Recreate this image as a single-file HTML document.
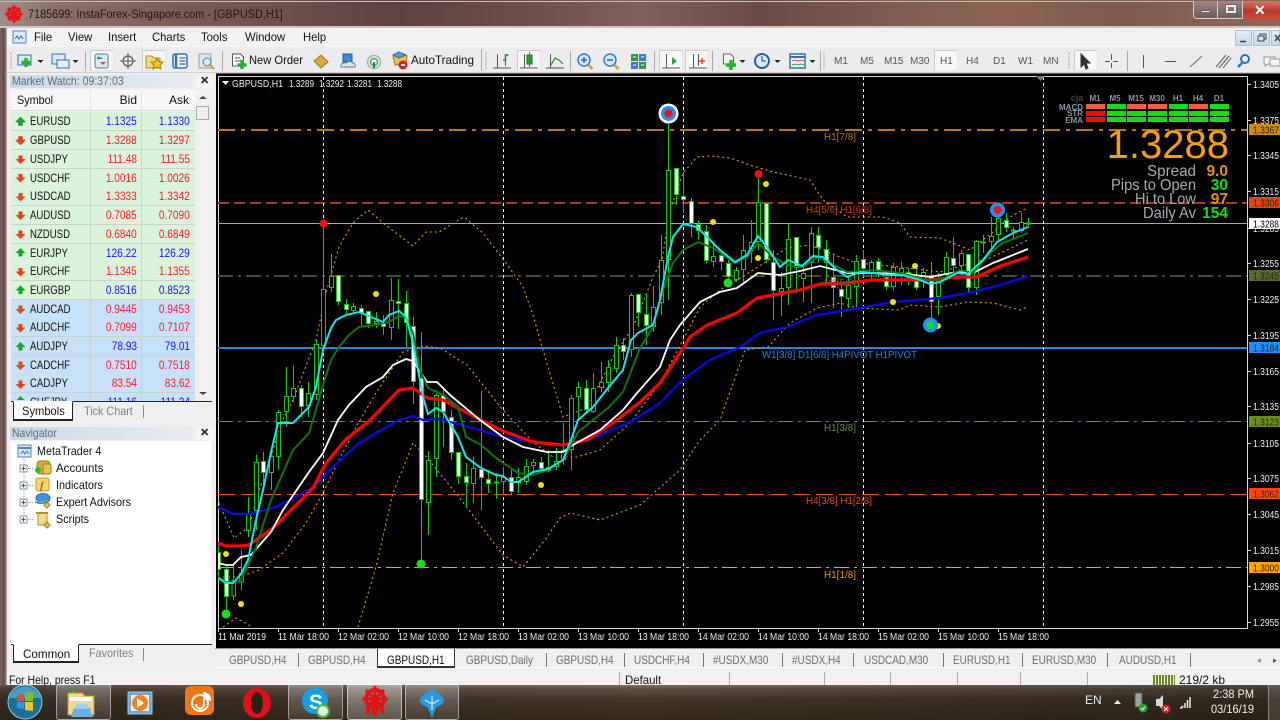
<!DOCTYPE html>
<html><head><meta charset="utf-8"><title>MT4</title>
<style>
html,body{margin:0;padding:0;width:1280px;height:720px;overflow:hidden;background:#6e5450;font-family:"Liberation Sans",sans-serif;font-size:12px;color:#111}
.t{position:absolute;white-space:nowrap;line-height:14px;transform-origin:0 50%}
.b{position:absolute}
.r{text-align:right}
.m{transform:scaleX(.94)}
.n{transform:scaleX(.9)}
.row{position:absolute;left:11px;width:184px;height:18px;border-bottom:1px solid #c9d2cc;font-size:12px;line-height:18px}
.row .s{position:absolute;left:19px;top:0;color:#111;transform:scaleX(.8);transform-origin:0 50%}
.row .bid{position:absolute;right:58px;top:0;transform:scaleX(.84);transform-origin:100% 50%}
.row .ask{position:absolute;right:5px;top:0;transform:scaleX(.84);transform-origin:100% 50%}
.g{background:#dbf3da}.bl{background:#c6e1f8}
.up{color:#1414ff}.dn{color:#ff1a2a}
.row i{position:absolute;left:79px;top:0;width:1px;height:18px;background:#c9d2cc}
.row u{position:absolute;left:130px;top:0;width:1px;height:18px;background:#c9d2cc}
.tab{position:absolute;top:653px;font-size:12px;color:#6f6f6f;line-height:14px;white-space:nowrap;transform:scaleX(.83);transform-origin:0 50%}
.sep{position:absolute;top:653px;width:1px;height:14px;background:#777}
.tf{position:absolute;top:55px;font-size:10px;color:#555;line-height:13px}
.press{position:absolute;background:#f7f7f7;border:1px solid #c9c9c9;border-right-color:#e6e6e6;border-bottom-color:#e6e6e6;box-sizing:border-box}
svg{position:absolute;left:0;top:0}
</style></head><body>

<!-- window glass title -->
<div class="b" style="left:0;top:0;width:1280px;height:28px;background:linear-gradient(90deg,#a08c88 0,#8a7068 60px,#7a5d58 180px,#5c4340 400px,#6b4e49 520px,#80605a 640px,#6a4c46 760px,#7f5d50 900px,#8a6452 1000px,#7d5a4c 1120px,#8a6a5c 1280px)"></div>
<div class="b" style="left:0;top:1px;width:1280px;height:1px;background:#c9bdb9"></div>
<div class="b" style="left:0;top:26px;width:1280px;height:2px;background:#cfc6c3"></div>
<div class="b" style="left:0;top:28px;width:7px;height:660px;background:linear-gradient(90deg,#7e6460,#604a46 60%,#b9aeab)"></div>
<div class="t" style="left:28px;top:7px;color:#1c1412;font-size:12px;transform:scaleX(.905)">7185699: InstaForex-Singapore.com - [GBPUSD,H1]</div>

<!-- window buttons -->
<div class="b" style="left:1193px;top:1px;width:25px;height:18px;background:linear-gradient(#9a8a86,#6e5a56);border:1px solid #d8d0cc;border-top:0;border-radius:0 0 0 4px;box-sizing:border-box"></div>
<div class="b" style="left:1218px;top:1px;width:25px;height:18px;background:linear-gradient(#9a8a86,#6e5a56);border:1px solid #d8d0cc;border-top:0;border-left:0;box-sizing:border-box"></div>
<div class="b" style="left:1243px;top:1px;width:37px;height:18px;background:linear-gradient(#d9756a,#b8362a 55%,#c8503c)"></div>
<div class="b" style="left:1201px;top:10px;width:10px;height:3px;background:#eee;border:1px solid #666;box-sizing:border-box"></div>
<div class="b" style="left:1226px;top:5px;width:10px;height:8px;border:2px solid #eee;box-sizing:border-box;outline:1px solid #666"></div>
<div class="t" style="left:1254px;top:2px;font-size:14px;font-weight:bold;color:#fff;line-height:16px">✕</div>

<!-- client -->
<div class="b" style="left:7px;top:28px;width:1273px;height:19px;background:#f2f2f2"></div>
<div class="b" style="left:7px;top:47px;width:1273px;height:26px;background:#ececee;border-bottom:1px solid #cfcfcf;box-sizing:border-box"></div>
<div class="b" style="left:7px;top:73px;width:209px;height:612px;background:#efefef"></div>
<div class="b" style="left:7px;top:648px;width:1273px;height:37px;background:#efefef"></div>

<!-- menu -->
<span class="t m" style="left:34px;top:30px">File</span>
<span class="t m" style="left:68px;top:30px">View</span>
<span class="t m" style="left:108px;top:30px">Insert</span>
<span class="t m" style="left:152px;top:30px">Charts</span>
<span class="t m" style="left:201px;top:30px">Tools</span>
<span class="t m" style="left:245px;top:30px">Window</span>
<span class="t m" style="left:303px;top:30px">Help</span>
<div class="b" style="left:1235px;top:30px;width:17px;height:16px;background:linear-gradient(#e4eef8,#c4d8ec);border:1px solid #a8c0d8;box-sizing:border-box"></div>
<div class="b" style="left:1253px;top:30px;width:17px;height:16px;background:linear-gradient(#e4eef8,#c4d8ec);border:1px solid #a8c0d8;box-sizing:border-box"></div>
<div class="b" style="left:1271px;top:30px;width:9px;height:16px;background:linear-gradient(#e4eef8,#c4d8ec);border:1px solid #a8c0d8;box-sizing:border-box"></div>

<!-- pressed toolbar -->
<div class="press" style="left:90px;top:50px;width:24px;height:21px"></div>
<div class="press" style="left:142px;top:50px;width:24px;height:21px"></div>
<div class="press" style="left:517px;top:50px;width:24px;height:21px"></div>
<div class="press" style="left:659px;top:50px;width:24px;height:21px"></div>
<div class="press" style="left:685px;top:50px;width:24px;height:21px"></div>
<div class="press" style="left:934px;top:50px;width:24px;height:21px"></div>
<div class="press" style="left:1074px;top:50px;width:24px;height:21px"></div>

<span class="t" style="left:249px;top:53px;transform:scaleX(.93)">New Order</span>
<span class="t" style="left:411px;top:53px;transform:scaleX(.97)">AutoTrading</span>
<span class="tf" style="left:834px">M1</span><span class="tf" style="left:860px">M5</span><span class="tf" style="left:884px">M15</span><span class="tf" style="left:910px">M30</span><span class="tf" style="left:940px">H1</span><span class="tf" style="left:966px">H4</span><span class="tf" style="left:993px">D1</span><span class="tf" style="left:1018px">W1</span><span class="tf" style="left:1043px">MN</span>

<!-- toolbar icons -->
<svg width="1280" height="75" viewBox="0 0 1280 75">
<g fill="none" stroke-width="1">
<g><circle cx="14" cy="14" r="6" fill="none" stroke="#e8141c" stroke-width="3"/><path d="M14 5v18M5 14h18M8 8l12 12M20 8L8 20" stroke="#e8141c" stroke-width="2"/><path d="M12 11h4v8h-4z" fill="#e8141c"/></g>
<rect x="13" y="31" width="13" height="12" fill="#dbe8f6" stroke="#4d86c0"/><path d="M15 39l2-3 2 3 2-3 2 3" stroke="#2d68b0"/>
<path d="M11 52v18M486 52v18M824 52v18M1069 52v18" stroke="#bcbcbc" stroke-width="2" stroke-dasharray="1 1"/>
<path d="M85.5 51v20M222.5 51v20M481.5 49v22M570.5 51v20M654.5 51v20M712.5 51v20M1127.5 51v20M820.5 51v20" stroke="#a8a8a8"/>
<rect x="18" y="55" width="13" height="10" fill="#dbe8f6" stroke="#2f74b5"/><path d="M26 58v9M21.5 62.5h10" stroke="#25b52a" stroke-width="3.5"/>
<path d="M37.5 60h6l-3 3z" fill="#222"/>
<rect x="52" y="54" width="13" height="10" fill="#dbe8f6" stroke="#2f74b5"/><rect x="57" y="60" width="12" height="8" fill="#e8f0fa" stroke="#2f74b5"/>
<path d="M72.5 60h6l-3 3z" fill="#222"/>
<rect x="95" y="54" width="13" height="14" rx="2" fill="#dfeaf6" stroke="#3f7fbd"/><path d="M99 59l2-2 2 2z" fill="#2aa52a"/><path d="M100 62l3 3 3-3z" fill="#e84a20"/><circle cx="98.5" cy="58" r="1.5" fill="#2aa52a"/>
<circle cx="128" cy="61" r="5" stroke="#666" stroke-width="1.4"/><path d="M128 53v16M120 61h16" stroke="#555"/>
<path d="M146 56h6l2 2h6v10h-14z" fill="#f2d979" stroke="#b08d2c"/><path d="M157 58l2 4h4l-3 3 1 4-4-2-4 2 1-4-3-3h4z" fill="#f4c91e" stroke="#a47d10"/>
<rect x="173" y="54" width="14" height="14" rx="2" fill="#f2f7fc" stroke="#2f74b5" stroke-width="1.5"/><path d="M176 54v14" stroke="#2f74b5" stroke-width="2.5"/><path d="M179.5 58h6M179.5 61h6M179.5 64h6" stroke="#335"/>
<rect x="199" y="54" width="12" height="14" fill="#e6e6e6" stroke="#9a9a9a"/><circle cx="207" cy="62" r="4" fill="#d6e8f8" stroke="#4a7da8"/><path d="M210 65l4 4" stroke="#d2a030" stroke-width="2"/>
<path d="M232.5 54h8l3 3v9h-11z" fill="#fff" stroke="#555"/><path d="M235 58h5M235 61h6" stroke="#555"/><path d="M242 60v9M237.5 65h9" stroke="#24b52b" stroke-width="3.5"/>
<path d="M314 61l7-6 7 7-7 6z" fill="#d9aa3b" stroke="#9c7620"/>
<path d="M343 54h9v8h-9z" fill="#3f8ad6" stroke="#1d5aa0"/><path d="M341 66c0-3 3-4 5-3 2-2 5-2 7 0 2 0 3 2 2 4h-14z" fill="#dfe6ee" stroke="#5a7ea8"/>
<circle cx="374" cy="62" r="6.5" stroke="#94b8a8" stroke-width="1.5"/><circle cx="374" cy="62" r="3.5" stroke="#5e9f70" stroke-width="1.5"/><path d="M374 62v6" stroke="#2f7d4a" stroke-width="2"/>
<path d="M393 57c2-3 9-4 14-1l-1 8-11 1z" fill="#e8c14a" stroke="#9b7d1c"/><path d="M393 55l6-3 7 3-7 3z" fill="#5aa0d8" stroke="#2a6ca0"/><circle cx="403" cy="65" r="4.5" fill="#d8201c"/><rect x="401" y="64" width="4" height="2" fill="#fff"/>
<path d="M497.5 54v14M493 68h18M505.5 54v12" stroke="#555"/><path d="M503 60h2.5v-5h3" stroke="#1f8a2a" stroke-width="1.5"/>
<path d="M524.5 54v14M520 68h18" stroke="#555"/><rect x="527" y="55" width="5" height="9" fill="#28a82c" stroke="#176c1c"/><path d="M529.5 52v15" stroke="#1f8a2a"/>
<path d="M550.5 54v14M546 68h18" stroke="#555"/><path d="M551 65l4-7 4 2 4 4" stroke="#1f8a2a" stroke-width="1.2"/>
<circle cx="584" cy="60" r="6" fill="#d5e8f8" stroke="#3a7cc0" stroke-width="1.5"/><path d="M581 60h6M584 57v6" stroke="#2a68b0" stroke-width="1.5"/><path d="M588.5 65l4 4" stroke="#d2a63a" stroke-width="3"/>
<circle cx="610" cy="60" r="6" fill="#d5e8f8" stroke="#3a7cc0" stroke-width="1.5"/><path d="M607 60h6" stroke="#2a68b0" stroke-width="1.5"/><path d="M614.5 65l4 4" stroke="#d2a63a" stroke-width="3"/>
<rect x="631" y="54" width="7" height="7" fill="#2e9b3a"/><rect x="639" y="54" width="7" height="7" fill="#3a7cc8"/><rect x="631" y="62" width="7" height="7" fill="#3a7cc8"/><rect x="639" y="62" width="7" height="7" fill="#2e9b3a"/><path d="M633 57h3M641 57h3M633 65h3M641 65h3" stroke="#fff"/>
<path d="M666.5 54v14M662 68h18" stroke="#555"/><path d="M672 57l5 4-5 4z" fill="#2aa52e"/>
<path d="M693.5 54v14M689 68h18M698.5 54v12" stroke="#555"/><path d="M702 58v6M699 61h6" stroke="#e04818" stroke-width="1.5"/>
<path d="M723.5 54h7l3 3v7h-10z" fill="#f4f4f4" stroke="#666"/><path d="M731 60v10M726 65h10" stroke="#24b52b" stroke-width="3.5"/><path d="M739.5 60h6l-3 3z" fill="#222"/>
<circle cx="762" cy="61" r="7" fill="#dceaf8" stroke="#1f62ac" stroke-width="2"/><path d="M762 56v5h4" stroke="#1f3f78"/><path d="M774.5 60h6l-3 3z" fill="#222"/>
<rect x="790" y="54" width="15" height="14" fill="#f3f7fc" stroke="#2f74b5" stroke-width="1.5"/><path d="M790 57h15" stroke="#2f74b5" stroke-width="2"/><path d="M792 61l3-1 3 1 3-1 3 1" stroke="#d84a28"/><path d="M792 65l3-1 3 1 3-1 3 1" stroke="#2aa52e"/><path d="M809.5 60h6l-3 3z" fill="#222"/>
<path d="M1081 54l0 13 3-3 2 5 2-1-2-5 4 0z" fill="#333" stroke="#333"/>
<path d="M1111.5 54v14M1105 61.5h13" stroke="#555"/><path d="M1110 60h3v3h-3z" fill="#ececee" stroke="none"/>
<path d="M1143.5 55v13" stroke="#555"/><path d="M1165 61.5h11" stroke="#555"/><path d="M1190 67l12-11" stroke="#666"/>
<path d="M1216 67l10-12M1219 68l10-12M1223 68l8-10" stroke="#555"/>
<circle cx="1245" cy="59" r="4" stroke="#2374cc" stroke-width="2"/><path d="M1242 63l-4 4" stroke="#2374cc" stroke-width="2.5"/>
<path d="M1264 57h11v7h-7l-3 2v-2h-1z" fill="#f4f4f4" stroke="#999"/><path d="M1270 59h10v7h-10z" fill="#f4f4f4" stroke="#999"/>
<path d="M1240 41.5h6" stroke="#345" stroke-width="1.5"/><rect x="1260" y="34" width="6" height="5" stroke="#345"/><rect x="1258" y="36" width="6" height="5" fill="#d5e3f0" stroke="#345"/><path d="M1275 35l5 6M1280 35l-5 6" stroke="#345" stroke-width="1.5"/>
</g>
</svg>

<!-- Market watch -->
<div class="b" style="left:10px;top:75px;width:185px;height:13px;background:linear-gradient(90deg,#c9d9e8,#dfe7ef 70%,#e9edf1)"></div>
<div class="t" style="left:12px;top:74px;color:#5f6a74;font-size:12px;transform:scaleX(.88)">Market Watch: 09:37:03</div>
<div class="b" style="left:197px;top:75px;width:16px;height:13px;background:#f5f5f5"></div>
<div class="t" style="left:200px;top:74px;font-size:11px;font-weight:bold;color:#111">✕</div>
<div class="b" style="left:11px;top:90px;width:184px;height:21px;background:#f7f7f7;border-bottom:1px solid #d8d8d8;box-sizing:border-box"></div>
<div class="b" style="left:90px;top:91px;width:1px;height:19px;background:#e2e2e2"></div><div class="b" style="left:141px;top:91px;width:1px;height:19px;background:#e2e2e2"></div>
<span class="t n" style="left:17px;top:93px">Symbol</span>
<span class="t r" style="right:1143px;top:93px">Bid</span>
<span class="t r" style="right:1091px;top:93px">Ask</span>
<div class="b" style="left:195px;top:90px;width:17px;height:311px;background:#f0f0f0"></div>
<div class="b" style="left:196px;top:106px;width:13px;height:14px;background:#eee;border:1px solid #aaa;box-sizing:border-box"></div>

<div class="row g" style="top:112px"><span class="s">EURUSD</span><i></i><u></u><span class="bid up">1.1325</span><span class="ask up">1.1330</span></div>
<div class="row g" style="top:131px"><span class="s">GBPUSD</span><i></i><u></u><span class="bid dn">1.3288</span><span class="ask dn">1.3297</span></div>
<div class="row g" style="top:149.7px"><span class="s">USDJPY</span><i></i><u></u><span class="bid dn">111.48</span><span class="ask dn">111.55</span></div>
<div class="row g" style="top:168.5px"><span class="s">USDCHF</span><i></i><u></u><span class="bid dn">1.0016</span><span class="ask dn">1.0026</span></div>
<div class="row g" style="top:187px"><span class="s">USDCAD</span><i></i><u></u><span class="bid dn">1.3333</span><span class="ask dn">1.3342</span></div>
<div class="row g" style="top:206px"><span class="s">AUDUSD</span><i></i><u></u><span class="bid dn">0.7085</span><span class="ask dn">0.7090</span></div>
<div class="row g" style="top:224.5px"><span class="s">NZDUSD</span><i></i><u></u><span class="bid dn">0.6840</span><span class="ask dn">0.6849</span></div>
<div class="row g" style="top:243.5px"><span class="s">EURJPY</span><i></i><u></u><span class="bid up">126.22</span><span class="ask up">126.29</span></div>
<div class="row g" style="top:262px"><span class="s">EURCHF</span><i></i><u></u><span class="bid dn">1.1345</span><span class="ask dn">1.1355</span></div>
<div class="row g" style="top:281px"><span class="s">EURGBP</span><i></i><u></u><span class="bid up">0.8516</span><span class="ask up">0.8523</span></div>
<div class="row bl" style="top:299.5px"><span class="s">AUDCAD</span><i></i><u></u><span class="bid dn">0.9445</span><span class="ask dn">0.9453</span></div>
<div class="row bl" style="top:318px"><span class="s">AUDCHF</span><i></i><u></u><span class="bid dn">0.7099</span><span class="ask dn">0.7107</span></div>
<div class="row bl" style="top:337px"><span class="s">AUDJPY</span><i></i><u></u><span class="bid up">78.93</span><span class="ask up">79.01</span></div>
<div class="row bl" style="top:355.5px"><span class="s">CADCHF</span><i></i><u></u><span class="bid dn">0.7510</span><span class="ask dn">0.7518</span></div>
<div class="row bl" style="top:374px"><span class="s">CADJPY</span><i></i><u></u><span class="bid dn">83.54</span><span class="ask dn">83.62</span></div>
<div class="row bl" style="top:393px;height:8px;overflow:hidden;border:0"><span class="s">CHFJPY</span><i></i><u></u><span class="bid up">111.16</span><span class="ask up">111.24</span></div>

<svg width="216" height="530" viewBox="0 0 216 530">
<g>
<path d="M20.5 117l5 5h-3v3.5h-4V122h-3z" fill="#16a52a" stroke="#0f7a1d" stroke-width=".5"/>
<path d="M20.5 145l5-5h-3v-3.5h-4V140h-3z" fill="#e4451e" stroke="#b5330f" stroke-width=".5"/>
<path d="M20.5 164l5-5h-3v-3.5h-4V159h-3z" fill="#e4451e"/>
<path d="M20.5 182.5l5-5h-3V174h-4v3.5h-3z" fill="#e4451e"/>
<path d="M20.5 201.5l5-5h-3V193h-4v3.5h-3z" fill="#e4451e"/>
<path d="M20.5 220l5-5h-3v-3.5h-4V215h-3z" fill="#e4451e"/>
<path d="M20.5 239l5-5h-3v-3.5h-4V234h-3z" fill="#e4451e"/>
<path d="M20.5 248l5 5h-3v3.5h-4V253h-3z" fill="#16a52a"/>
<path d="M20.5 276.5l5-5h-3V268h-4v3.5h-3z" fill="#e4451e"/>
<path d="M20.5 285.5l5 5h-3V294h-4v-3.5h-3z" fill="#16a52a"/>
<path d="M20.5 314l5-5h-3v-3.5h-4V309h-3z" fill="#e4451e"/>
<path d="M20.5 332.5l5-5h-3V324h-4v3.5h-3z" fill="#e4451e"/>
<path d="M20.5 342l5 5h-3v3.5h-4V347h-3z" fill="#16a52a"/>
<path d="M20.5 370l5-5h-3v-3.5h-4V365h-3z" fill="#e4451e"/>
<path d="M20.5 389l5-5h-3v-3.5h-4V384h-3z" fill="#e4451e"/>
<path d="M20.5 396l4 4h-8z" fill="#16a52a"/>
<path d="M199 99h8l-4-3z" fill="#444"/><path d="M199 392h8l-4 3z" fill="#444"/>
</g></svg>

<!-- Tabs under MW -->
<div class="b" style="left:11px;top:401px;width:201px;height:1px;background:#222"></div>
<div class="b" style="left:13px;top:401px;width:60px;height:20px;background:#fff;border:1px solid #222;border-top:1px solid #fff;border-bottom-width:2px;box-sizing:border-box"></div>
<span class="t" style="left:22px;top:404px;transform:scaleX(.93)">Symbols</span>
<span class="t" style="left:84px;top:404px;color:#7f7f7f;transform:scaleX(.9)">Tick Chart</span>
<div class="b" style="left:143px;top:405px;width:1px;height:13px;background:#888"></div>

<!-- Navigator -->
<div class="b" style="left:10px;top:427px;width:185px;height:13px;background:linear-gradient(90deg,#c9d9e8,#dfe7ef 70%,#e9edf1)"></div>
<div class="t" style="left:12px;top:426px;color:#5f6a74;transform:scaleX(.87)">Navigator</div>
<div class="b" style="left:197px;top:427px;width:16px;height:13px;background:#f5f5f5"></div>
<div class="t" style="left:200px;top:426px;font-size:11px;font-weight:bold;color:#111">✕</div>
<div class="b" style="left:11px;top:441px;width:200px;height:203px;background:#fff"></div>
<span class="t n" style="left:37px;top:444px">MetaTrader 4</span>
<span class="t" style="left:56px;top:461px;transform:scaleX(.96)">Accounts</span>
<span class="t n" style="left:56px;top:478px">Indicators</span>
<span class="t n" style="left:56px;top:495px">Expert Advisors</span>
<span class="t n" style="left:56px;top:512px">Scripts</span>
<svg width="216" height="540" viewBox="0 0 216 540">
<rect x="18" y="445" width="13" height="12" fill="#dbe8f6" stroke="#4d86c0"/><path d="M18 448h13" stroke="#4d86c0" stroke-width="2"/><path d="M21 454l2-3 2 3 2-3 2 3" stroke="#3a78b8" fill="none"/>
<path d="M24 458v62" stroke="#999" stroke-dasharray="1 1"/>
<path d="M28 468.5h6M28 485.5h6M28 502.5h6M28 519.5h6" stroke="#999" stroke-dasharray="1 1"/>
<g fill="#f4f4f4" stroke="#8a97a8"><rect x="20" y="465" width="7" height="7"/><rect x="20" y="482" width="7" height="7"/><rect x="20" y="499" width="7" height="7"/><rect x="20" y="516" width="7" height="7"/></g>
<path d="M21.5 468.5h4M23.5 466.5v4M21.5 485.5h4M23.5 483.5v4M21.5 502.5h4M23.5 500.5v4M21.5 519.5h4M23.5 517.5v4" stroke="#34527a"/>
<rect x="37" y="461" width="13" height="13" rx="3" fill="#d9ac2e" stroke="#9c7a18"/><rect x="43" y="464" width="8" height="10" rx="2" fill="#e8c552" stroke="#9c7a18"/><circle cx="38" cy="470" r="3" fill="#2dbb2e"/>
<rect x="36" y="478" width="13" height="13" rx="2" fill="#f4d66c" stroke="#bd9a2a"/><text x="40" y="489" font-size="11" font-style="italic" font-weight="bold" fill="#96701a" font-family="Liberation Serif,serif">f</text>
<ellipse cx="43" cy="498" rx="7" ry="4.5" fill="#3f94dc" stroke="#2568a8"/><path d="M35 502c3 2 11 2 15-2" stroke="#2568a8" fill="#68b0e8"/><path d="M47 502l3 3-3 3-3-3z" fill="#e8c552" stroke="#9c7a18"/>
<path d="M38 513h9v12h-9z" fill="#f0dc8c" stroke="#b0922c"/><path d="M36 513h12" stroke="#b0922c" stroke-width="2"/><path d="M47 522l3 3-3 3-3-3z" fill="#e8c552" stroke="#9c7a18"/>
</svg>

<div class="b" style="left:11px;top:644px;width:201px;height:1px;background:#222"></div>
<div class="b" style="left:13px;top:644px;width:66px;height:19px;background:#fff;border:1px solid #222;border-top-color:#fff;border-bottom-width:2px;box-sizing:border-box"></div>
<span class="t" style="left:23px;top:647px;transform:scaleX(.97)">Common</span>
<span class="t n" style="left:89px;top:646px;color:#7f7f7f">Favorites</span>
<div class="b" style="left:143px;top:648px;width:1px;height:13px;background:#888"></div>

<!-- Chart -->
<div class="b" style="left:216px;top:74px;width:1064px;height:574px;background:#000"></div>
<svg width="1280" height="720" viewBox="0 0 1280 720" style="font-family:'Liberation Sans',sans-serif">
<defs><clipPath id="c"><rect x="218" y="77" width="1029" height="551"/></clipPath></defs>
<g fill="none">
<path d="M218.5 76.5H1247.5V628.5H218.5Z" stroke="#d9d9d9"/>
<g clip-path="url(#c)">
<path d="M218 130H1247" stroke="#b8780f" stroke-width="2" stroke-dasharray="17 6 4 6"/>
<path d="M218 203H1247" stroke="#a63a12" stroke-width="2" stroke-dasharray="11 5"/>
<path d="M218 223.5H1247" stroke="#a9a9a9"/>
<path d="M218 276H1247" stroke="#556b2f" stroke-width="1.5" stroke-dasharray="15 5 3 5"/>
<path d="M218 348H1247" stroke="#2086e0" stroke-width="2"/>
<path d="M218 421.5H1247" stroke="#6b8e23" stroke-dasharray="15 5 3 5"/>
<path d="M218 494.5H1247" stroke="#ff4500" stroke-dasharray="17 6"/>
<path d="M218 567.5H1247" stroke="#ffa500" stroke-dasharray="15 5 3 5"/>
<path d="M323.5 77V628M503.5 77V628M683.5 77V628M863.5 77V628M1043.5 77V628" stroke="#fff" stroke-dasharray="3 3"/>

<g stroke="#e89a10" stroke-dasharray="2 3" stroke-width="1.1">
<path d="M219 503L234 538 249 527 259 490 269 467 279 427 293 400 316 340 326 293 339 247 353 223 368 210 383 223 413 246 426 232 439 232 464 217 483 233 506 263 523 287 533 315 543 350 563 417 587 408 613 357 633 327 653 277 662 260 670 210 683 173 697 157 710 156 730 158 750 165 773 172 810 180 823 200 847 217 883 217 900 223 910 237 940 238 970 250 993 232 1010 217 1027 208"/>
<path d="M223 577L239 577 259 570 283 553 306 523 323 493 339 460 356 427 376 393 403 352 423 346 440 348 467 365 503 410 533 442 553 457 577 457 600 450 630 423 660 383 683 340 700 307 720 290 750 272 787 248 810 245 840 257 857 263 900 267 940 272 990 258 1028 240"/>
<path d="M223 627L236 618 249 625 256 634M358 627L376 567 393 493 413 443 429 460 459 497 503 555 523 567 545 540 560 518 570 513 600 520 640 505 680 470 700 440 720 420 745 350 768 347 790 323 817 308 840 303 857 308 900 310 910 305 940 307 967 302 993 303 1020 310 1027 307"/>
</g>

<path stroke="#14c814" stroke-width="1" d="M218.5 545V580M226.5 566V612M233.5 565V600M241.5 550V590M248.5 497V537M256.5 455V530M263.5 452V492M271.5 450V490M278.5 410V470M286.5 367V427M293.5 366V402M301.5 385V417M308.5 382V417M316.5 340V400M323.5 223V350M331.5 254V292M338.5 275V305M346.5 299V315M353.5 303V313M361.5 305V327M368.5 311V328M376.5 312V328M383.5 315V335M391.5 278V340M398.5 279V329M406.5 291V347M413.5 317V404M421.5 332V564M428.5 451V535M436.5 390V477M443.5 390V447M451.5 410V460M458.5 452V484M466.5 463V508M473.5 457V503M481.5 391V510M488.5 470V493M496.5 473V499M503.5 467V495M511.5 468V495M518.5 468V493M526.5 459V485M533.5 459V475M541.5 457V473M548.5 450V472M556.5 448V470M563.5 423V465M571.5 395V470M578.5 382V420M586.5 380V412M593.5 373V413M601.5 362V392M608.5 360V392M616.5 337V373M623.5 338V360M631.5 293V357M638.5 294V327M646.5 293V345M653.5 286V332M661.5 235V315M668.5 120V300M676.5 168V205M683.5 172V213M691.5 198V237M698.5 220V240M706.5 225V263M713.5 243V267M721.5 250V270M728.5 260V285M736.5 267V282M743.5 235V282M751.5 220V263M758.5 175V250M766.5 203V263M773.5 250V320M781.5 272V316M788.5 224V305M796.5 237V293M803.5 267V302M811.5 227V303M818.5 227V263M826.5 240V285M833.5 253V308M841.5 282V317M848.5 277V308M856.5 255V307M863.5 250V277M871.5 260V282M878.5 258V277M886.5 273V290M893.5 263V290M901.5 262V285M908.5 268V285M916.5 270V290M923.5 268V288M931.5 262V318M938.5 273V315M946.5 252V280M953.5 237V275M961.5 250V277M968.5 254V292M976.5 240V295M983.5 235V253M991.5 217V253M998.5 217V240M1006.5 213V232M1013.5 227V238M1021.5 213V233M1028.5 218V228"/>
<path stroke="#14c814" fill="#000" d="M232 580.5h3.5v15.5h-3.5zM239.5 573.5h4v8.5h-4zM246.5 513.5h4v17h-4zM254.5 462.5h4v48h-4zM269.5 456.5h4v16h-4zM276.5 412.5h4v44h-4zM284.5 396.5h4v15h-4zM291.5 388.5h4v8h-4zM306.5 393.5h4v12h-4zM314.5 344.5h4v50h-4zM321.5 289.5h4v56h-4zM329.5 276.5h4v11h-4zM351.5 306.5h4v4h-4zM374.5 321.5h4v2h-4zM389.5 300.5h4v27h-4zM426.5 460.5h4v42h-4zM434.5 395.5h4v63h-4zM471.5 468.5h4v15h-4zM494.5 482h4v1h-4zM501.5 477.5h4v4h-4zM516.5 477.5h4v5h-4zM524.5 466.5h4v15h-4zM531.5 462.5h4v3h-4zM546.5 467.5h4v3h-4zM554.5 461.5h4v5h-4zM561.5 450.5h4v9h-4zM569.5 398.5h4v51h-4zM576.5 387.5h4v9h-4zM591.5 388.5h4v23h-4zM599.5 382.5h4v5h-4zM606.5 367.5h4v15h-4zM614.5 345.5h4v23h-4zM629.5 295.5h4v54h-4zM651.5 307.5h4v19h-4zM659.5 260.5h4v42h-4zM666.5 170.5h4v89h-4zM711.5 256.5h4v5h-4zM734.5 270.5h4v9h-4zM741.5 250.5h4v19h-4zM749.5 242.5h4v6h-4zM756.5 202.5h4v39h-4zM779.5 288.5h4v3h-4zM786.5 239.5h4v48h-4zM801.5 273.5h4v5h-4zM809.5 233.5h4v29h-4zM846.5 285.5h4v13h-4zM854.5 261.5h4v25h-4zM869.5 262.5h4v10h-4zM891.5 267.5h4v19h-4zM899.5 268.5h4v4h-4zM921.5 272.5h4v7h-4zM936.5 280.5h4v16h-4zM944.5 257.5h4v17h-4zM959.5 253.5h4v12h-4zM974.5 241.5h4v46h-4zM989.5 236.5h4v5h-4zM996.5 218.5h4v16h-4zM1011.5 230h4v1h-4zM1019.5 222.5h4v8h-4zM1026.5 223h4v1h-4z"/>
<path stroke="#14c814" fill="#fff" d="M216.5 552.5h4v17h-4zM224.5 569.5h4v27h-4zM261.5 461.5h4v11h-4zM299.5 388.5h4v18h-4zM336.5 275.5h4v26h-4zM344.5 304.5h4v5h-4zM359.5 308.5h4v4h-4zM366.5 311.5h4v12h-4zM381.5 322.5h4v4h-4zM396.5 301.5h4v2h-4zM404.5 303.5h4v19h-4zM411.5 326.5h4v55h-4zM419.5 378.5h4v121h-4zM441.5 395.5h4v16h-4zM449.5 417.5h4v35h-4zM456.5 452.5h4v24h-4zM464.5 476.5h4v6h-4zM479.5 469.5h4v8h-4zM486.5 479.5h4v4h-4zM509.5 477.5h4v14h-4zM539.5 462.5h4v6h-4zM584.5 388.5h4v21h-4zM621.5 345.5h4v6h-4zM636.5 294.5h4v18h-4zM644.5 314.5h4v11h-4zM674.5 168.5h4v26h-4zM681.5 196.5h4v3h-4zM689.5 201.5h4v22h-4zM696.5 224.5h4v6h-4zM704.5 231.5h4v29h-4zM719.5 255.5h4v6h-4zM726.5 263.5h4v13h-4zM764.5 203.5h4v56h-4zM771.5 262.5h4v28h-4zM794.5 237.5h4v30h-4zM816.5 235.5h4v12h-4zM824.5 249.5h4v13h-4zM831.5 277.5h4v10h-4zM839.5 289.5h4v7h-4zM861.5 259.5h4v9h-4zM876.5 261.5h4v9h-4zM884.5 277.5h4v9h-4zM906.5 272.5h4v5h-4zM914.5 277.5h4v10h-4zM929.5 275.5h4v26h-4zM951.5 258.5h4v7h-4zM966.5 254.5h4v33h-4zM981.5 242h4v1h-4zM1004.5 220.5h4v7h-4z"/>

<path stroke="#0808e8" stroke-width="2.2" d="M218 507L233 514 249 514 273 508 296 497 313 487 333 467 359 443 399 420 413 416 423 420 439 419 469 427 503 437 533 442 563 445 600 435 630 422 660 403 680 382 710 360 740 347 760 333 787 327 817 315 847 310 893 302 940 298 973 292 1000 285 1028 276"/>
<path stroke="#ff0000" stroke-width="3.2" d="M218 543L226 546 241 546 249 545 273 528 299 502 313 488 326 463 346 439 369 421 399 390 413 388 427 398 443 400 473 416 503 431 533 442 563 445 587 440 613 423 640 402 660 383 680 353 690 337 707 325 737 313 757 298 773 295 800 290 820 284 847 283 873 280 907 280 930 280 957 277 977 277 1000 266 1028 257"/>
<path stroke="#ffffff" stroke-width="1.8" d="M218 563L226 565 233 565 241 557 251 555 271 532 283 510 309 472 323 453 338 420 349 405 366 387 383 377 393 365 406 359 413 361 427 382 437 382 450 395 480 420 503 437 523 447 547 452 563 452 573 445 600 430 623 410 637 393 660 367 670 340 680 325 700 302 720 292 737 288 758 273 780 275 800 271 820 266 847 273 873 273 907 274 930 277 957 272 973 273 993 263 1028 249"/>
<path stroke="#0a780a" stroke-width="2" d="M218 577L226 582 233 583 241 580 256 548 263 525 271 500 293 450 309 433 316 410 323 385 331 360 339 347 349 335 359 327 376 325 389 322 399 316 406 318 413 333 421 373 428 388 443 395 458 407 466 437 481 445 496 458 518 473 533 475 548 470 563 460 578 432 608 408 623 392 640 348 653 327 663 290 673 263 683 250 698 242 713 248 735 263 747 257 758 243 773 257 790 266 803 267 817 257 830 263 847 272 873 270 900 273 927 280 940 280 960 270 973 273 990 253 1003 243 1028 233"/>
<path stroke="#10e8f0" stroke-width="2" d="M218 578L226 583 233 583 241 574 248 560 256 520 263 490 271 452 278 423 293 423 309 407 316 387 323 350 331 328 336 320 346 315 359 312 371 317 383 322 389 315 399 311 406 317 413 343 418 370 423 397 428 414 436 408 443 412 458 437 466 457 481 468 496 475 503 476 511 482 518 482 526 477 533 472 548 469 563 460 571 440 578 420 593 407 608 388 623 370 631 340 638 333 653 325 660 300 668 257 673 237 683 224 697 227 707 237 720 250 735 262 747 255 758 236 767 247 780 267 788 260 802 266 813 256 823 257 837 270 847 277 860 272 873 273 887 275 903 275 917 279 930 284 940 282 957 273 968 274 983 260 997 242 1013 233 1028 227"/>

<g stroke="none">
<circle cx="323.5" cy="223.5" r="4" fill="#f01010"/>
<circle cx="758.5" cy="174" r="4" fill="#f01010"/>
<circle cx="376" cy="294" r="3" fill="#f0e010"/><circle cx="541" cy="485" r="3" fill="#f0e010"/><circle cx="713" cy="222" r="3" fill="#f0e010"/><circle cx="766" cy="184" r="3" fill="#f0e010"/><circle cx="758" cy="258" r="3" fill="#f0e010"/><circle cx="915" cy="266" r="3" fill="#f0e010"/><circle cx="893" cy="302" r="3" fill="#f0e010"/><circle cx="938" cy="326" r="3" fill="#f0e010"/><circle cx="226" cy="554" r="3" fill="#f0e010"/><circle cx="241" cy="604" r="3" fill="#f0e010"/>
<circle cx="421" cy="564" r="4.5" fill="#18e018"/><circle cx="226" cy="614" r="4.5" fill="#18e018"/><circle cx="728" cy="283" r="4.5" fill="#18e018"/>
<circle cx="668.5" cy="113.5" r="10" fill="#fff"/><circle cx="668.5" cy="113.5" r="7.5" fill="#1e90ff"/><circle cx="668.5" cy="113.5" r="4" fill="#f01010"/>
<circle cx="997.5" cy="210" r="7.5" fill="#1e90ff"/><circle cx="997.5" cy="210" r="4" fill="#f01010"/>
<circle cx="930.5" cy="325" r="7.5" fill="#1e90ff"/><circle cx="930.5" cy="325" r="4" fill="#18e018"/>
</g>
</g></g>

<g stroke="none" font-size="10">
<path d="M222 81h7l-3.5 4z" fill="#fff"/>
<g fill="#eee" font-size="10">
<text x="232" y="87" textLength="51" lengthAdjust="spacingAndGlyphs">GBPUSD,H1</text>
<text x="289" y="87" textLength="25" lengthAdjust="spacingAndGlyphs">1.3289</text>
<text x="319" y="87" textLength="25" lengthAdjust="spacingAndGlyphs">1.3292</text>
<text x="347" y="87" textLength="25" lengthAdjust="spacingAndGlyphs">1.3281</text>
<text x="377" y="87" textLength="25" lengthAdjust="spacingAndGlyphs">1.3288</text>
</g>
<path d="M1036 76h9l-4.5 5z" fill="#777"/>
<text x="824" y="140" fill="#b8780f" textLength="32" lengthAdjust="spacingAndGlyphs">H1[7/8]</text>
<text x="806" y="213" fill="#c8400f" textLength="66" lengthAdjust="spacingAndGlyphs">H4[5/8] H1[6/8]</text>
<text x="824" y="286" fill="#556b2f" textLength="32" lengthAdjust="spacingAndGlyphs">H1[5/8]</text>
<text x="762" y="358" fill="#2086e0" textLength="155" lengthAdjust="spacingAndGlyphs">W1[3/8] D1[6/8] H4PIVOT H1PIVOT</text>
<text x="824" y="431" fill="#6b8e23" textLength="32" lengthAdjust="spacingAndGlyphs">H1[3/8]</text>
<text x="806" y="504" fill="#e84a10" textLength="66" lengthAdjust="spacingAndGlyphs">H4[3/8] H1[2/8]</text>
<text x="824" y="578" fill="#e89a10" textLength="32" lengthAdjust="spacingAndGlyphs">H1[1/8]</text>
<g font-weight="bold" font-size="8" fill="#8a96a4" text-anchor="middle">
<text x="1077" y="101" fill="#444" font-size="9">cja</text>
<text x="1095" y="101">M1</text><text x="1115" y="101">M5</text><text x="1136" y="101">M15</text><text x="1157" y="101">M30</text><text x="1178" y="101">H1</text><text x="1198" y="101">H4</text><text x="1219" y="101">D1</text>
</g>
<g font-weight="bold" font-size="8" fill="#8a96a4" text-anchor="end">
<text x="1083" y="110">MACD</text><text x="1083" y="116">STR</text><text x="1083" y="123">EMA</text>
</g>
<g fill="#0ee00e">
<path d="M1107 104h19v5h-19zM1169 104h19v5h-19zM1210 104h19v5h-19z"/>
<path d="M1107 111h19v5h-19zM1127 111h19v5h-19zM1148 111h19v5h-19zM1169 111h19v5h-19zM1189 111h19v5h-19zM1210 111h19v5h-19z"/>
<path d="M1107 117h19v5h-19zM1127 117h19v5h-19zM1148 117h19v5h-19zM1169 117h19v5h-19zM1189 117h19v5h-19zM1210 117h19v5h-19z"/>
</g>
<path d="M1086 104h19v5h-19zM1127 104h19v5h-19zM1148 104h19v5h-19zM1189 104h19v5h-19z" fill="#f0603f"/>
<path d="M1086 111h19v5h-19zM1086 117h19v5h-19z" fill="#f40a0a"/>
<text x="1229" y="158" fill="#f5a010" font-size="40" text-anchor="end">1.3288</text>
<g fill="#a4acb4" font-size="16">
<text x="1147" y="176" textLength="49" lengthAdjust="spacingAndGlyphs">Spread</text><text x="1111" y="190" textLength="85" lengthAdjust="spacingAndGlyphs">Pips to Open</text><text x="1135" y="204" textLength="61" lengthAdjust="spacingAndGlyphs">Hi to Low</text><text x="1143" y="218" textLength="53" lengthAdjust="spacingAndGlyphs">Daily Av</text>
</g>
<g font-size="15.5" font-weight="bold" text-anchor="end">
<text x="1228" y="176" fill="#e8920c">9.0</text><text x="1228" y="190" fill="#10e010">30</text><text x="1228" y="204" fill="#e8920c">97</text><text x="1228" y="218" fill="#10e010">154</text>
</g>
<path stroke="#d9d9d9" fill="none" d="M1248 84.5h3M1248 120.5h3M1248 155.5h3M1248 191.5h3M1248 228.5h3M1248 263.5h3M1248 299.5h3M1248 335.5h3M1248 371.5h3M1248 406.5h3M1248 443.5h3M1248 478.5h3M1248 514.5h3M1248 550.5h3M1248 586.5h3M1248 622.5h3"/>
<g fill="#eee" font-size="10">
<text x="1253" y="88" textLength="26" lengthAdjust="spacingAndGlyphs">1.3405</text><text x="1253" y="124" textLength="26" lengthAdjust="spacingAndGlyphs">1.3375</text><text x="1253" y="159" textLength="26" lengthAdjust="spacingAndGlyphs">1.3345</text><text x="1253" y="195" textLength="26" lengthAdjust="spacingAndGlyphs">1.3315</text><text x="1253" y="232" textLength="26" lengthAdjust="spacingAndGlyphs">1.3285</text><text x="1253" y="267" textLength="26" lengthAdjust="spacingAndGlyphs">1.3255</text><text x="1253" y="303" textLength="26" lengthAdjust="spacingAndGlyphs">1.3225</text><text x="1253" y="339" textLength="26" lengthAdjust="spacingAndGlyphs">1.3195</text><text x="1253" y="375" textLength="26" lengthAdjust="spacingAndGlyphs">1.3165</text><text x="1253" y="410" textLength="26" lengthAdjust="spacingAndGlyphs">1.3135</text><text x="1253" y="447" textLength="26" lengthAdjust="spacingAndGlyphs">1.3105</text><text x="1253" y="482" textLength="26" lengthAdjust="spacingAndGlyphs">1.3075</text><text x="1253" y="518" textLength="26" lengthAdjust="spacingAndGlyphs">1.3045</text><text x="1253" y="554" textLength="26" lengthAdjust="spacingAndGlyphs">1.3015</text><text x="1253" y="590" textLength="26" lengthAdjust="spacingAndGlyphs">1.2985</text><text x="1253" y="626" textLength="26" lengthAdjust="spacingAndGlyphs">1.2955</text>
</g>
<path d="M1249 124h31v11h-31z" fill="#cf8a10"/><path d="M1249 197h31v11h-31z" fill="#e5450f"/><path d="M1249 218h31v11h-31z" fill="#fff"/><path d="M1249 270h31v11h-31z" fill="#556b2f"/><path d="M1249 342h31v11h-31z" fill="#1e90ff"/><path d="M1249 416h31v11h-31z" fill="#6b8e23"/><path d="M1249 488h31v11h-31z" fill="#ff4500"/><path d="M1249 562h31v11h-31z" fill="#ffa500"/>
<g fill="#222" font-size="10">
<text x="1253" y="133.5" textLength="26" lengthAdjust="spacingAndGlyphs">1.3367</text><text x="1253" y="206.5" textLength="26" lengthAdjust="spacingAndGlyphs">1.3306</text><text x="1253" y="227.5" fill="#000" textLength="26" lengthAdjust="spacingAndGlyphs">1.3288</text><text x="1253" y="279.5" textLength="26" lengthAdjust="spacingAndGlyphs">1.3245</text><text x="1253" y="351.5" textLength="26" lengthAdjust="spacingAndGlyphs">1.3184</text><text x="1253" y="425.5" textLength="26" lengthAdjust="spacingAndGlyphs">1.3123</text><text x="1253" y="497.5" textLength="26" lengthAdjust="spacingAndGlyphs">1.3062</text><text x="1253" y="571.5" textLength="26" lengthAdjust="spacingAndGlyphs">1.3000</text>
</g>
<path stroke="#d9d9d9" fill="none" d="M218.5 629v3M278.5 629v3M338.5 629v3M398.5 629v3M458.5 629v3M518.5 629v3M578.5 629v3M638.5 629v3M698.5 629v3M758.5 629v3M818.5 629v3M878.5 629v3M938.5 629v3M998.5 629v3"/>
<g fill="#eee" font-size="10">
<text x="218" y="640" textLength="48" lengthAdjust="spacingAndGlyphs">11 Mar 2019</text><text x="278" y="640" textLength="51" lengthAdjust="spacingAndGlyphs">11 Mar 18:00</text><text x="338" y="640" textLength="51" lengthAdjust="spacingAndGlyphs">12 Mar 02:00</text><text x="398" y="640" textLength="51" lengthAdjust="spacingAndGlyphs">12 Mar 10:00</text><text x="458" y="640" textLength="51" lengthAdjust="spacingAndGlyphs">12 Mar 18:00</text><text x="518" y="640" textLength="51" lengthAdjust="spacingAndGlyphs">13 Mar 02:00</text><text x="578" y="640" textLength="51" lengthAdjust="spacingAndGlyphs">13 Mar 10:00</text><text x="638" y="640" textLength="51" lengthAdjust="spacingAndGlyphs">13 Mar 18:00</text><text x="698" y="640" textLength="51" lengthAdjust="spacingAndGlyphs">14 Mar 02:00</text><text x="758" y="640" textLength="51" lengthAdjust="spacingAndGlyphs">14 Mar 10:00</text><text x="818" y="640" textLength="51" lengthAdjust="spacingAndGlyphs">14 Mar 18:00</text><text x="878" y="640" textLength="51" lengthAdjust="spacingAndGlyphs">15 Mar 02:00</text><text x="938" y="640" textLength="51" lengthAdjust="spacingAndGlyphs">15 Mar 10:00</text><text x="998" y="640" textLength="51" lengthAdjust="spacingAndGlyphs">15 Mar 18:00</text>
</g>
</g>
</svg>

<!-- chart tabs -->
<div class="b" style="left:215px;top:648px;width:1065px;height:1px;background:#999"></div>
<div class="b" style="left:215px;top:667px;width:1065px;height:1px;background:#fff"></div>
<div class="b" style="left:377px;top:649px;width:78px;height:19px;background:#fff;border:1px solid #333;border-top:0;border-bottom-width:2px;box-sizing:border-box"></div>
<span class="tab" style="left:229px">GBPUSD,H4</span><i class="sep" style="left:298px"></i>
<span class="tab" style="left:308px">GBPUSD,H4</span>
<span class="tab" style="left:387px;color:#111">GBPUSD,H1</span>
<span class="tab" style="left:466px">GBPUSD,Daily</span><i class="sep" style="left:546px"></i>
<span class="tab" style="left:556px">GBPUSD,H4</span><i class="sep" style="left:624px"></i>
<span class="tab" style="left:634px">USDCHF,H4</span><i class="sep" style="left:703px"></i>
<span class="tab" style="left:713px">#USDX,M30</span><i class="sep" style="left:782px"></i>
<span class="tab" style="left:792px">#USDX,H4</span><i class="sep" style="left:853px"></i>
<span class="tab" style="left:864px">USDCAD,M30</span><i class="sep" style="left:943px"></i>
<span class="tab" style="left:953px">EURUSD,H1</span><i class="sep" style="left:1022px"></i>
<span class="tab" style="left:1032px">EURUSD,M30</span><i class="sep" style="left:1107px"></i>
<span class="tab" style="left:1119px">AUDUSD,H1</span><i class="sep" style="left:1190px"></i>
<span class="tab" style="left:1257px;font-size:9px;color:#888">◂</span><span class="tab" style="left:1273px;font-size:9px;color:#555">▸</span>

<!-- status bar -->
<div class="b" style="left:7px;top:671px;width:1273px;height:14px;background:#f1f1f1"></div>
<span class="t" style="left:9px;top:673px;transform:scaleX(.87)">For Help, press F1</span>
<span class="t" style="left:625px;top:673px;transform:scaleX(.95)">Default</span>
<span class="t" style="left:1179px;top:673px">219/2 kb</span>
<div class="b" style="left:619px;top:672px;width:1px;height:13px;background:#aaa"></div><div class="b" style="left:729px;top:672px;width:1px;height:13px;background:#aaa"></div><div class="b" style="left:824px;top:672px;width:1px;height:13px;background:#aaa"></div><div class="b" style="left:890px;top:672px;width:1px;height:13px;background:#aaa"></div><div class="b" style="left:957px;top:672px;width:1px;height:13px;background:#aaa"></div><div class="b" style="left:1020px;top:672px;width:1px;height:13px;background:#aaa"></div><div class="b" style="left:1087px;top:672px;width:1px;height:13px;background:#aaa"></div>
<div class="b" style="left:1153px;top:675px;width:22px;height:10px;background:repeating-linear-gradient(90deg,#6b8e23 0 2px,#f1f1f1 2px 3px)"></div>

<!-- taskbar -->
<div class="b" style="left:0;top:685px;width:1280px;height:35px;background:linear-gradient(90deg,rgba(35,28,24,.45),rgba(70,55,30,.15) 50%,rgba(30,25,15,.5)),linear-gradient(#8d7a72 0,#66564c 10%,#40352a 40%,#2f2718 100%)"></div>
<div class="b" style="left:56px;top:684px;width:55px;height:36px;background:linear-gradient(rgba(255,255,255,.28),rgba(255,255,255,.1));border:1px solid rgba(255,255,255,.45);border-radius:3px;box-sizing:border-box"></div>
<div class="b" style="left:288px;top:684px;width:55px;height:36px;background:linear-gradient(rgba(255,255,255,.28),rgba(255,255,255,.1));border:1px solid rgba(255,255,255,.45);border-radius:3px;box-sizing:border-box"></div>
<div class="b" style="left:347px;top:684px;width:55px;height:36px;background:linear-gradient(rgba(255,255,255,.45),rgba(255,255,255,.22));border:1px solid rgba(255,255,255,.55);border-radius:3px;box-sizing:border-box"></div>
<div class="b" style="left:405px;top:684px;width:54px;height:36px;background:linear-gradient(rgba(255,255,255,.28),rgba(255,255,255,.1));border:1px solid rgba(255,255,255,.45);border-radius:3px;box-sizing:border-box"></div>
<svg width="1280" height="720" viewBox="0 0 1280 720">
<circle cx="25" cy="702" r="17" fill="#1d6f96" stroke="#8fd0e0" stroke-width="1"/>
<path d="M9 698a17 17 0 0 1 32 0z" fill="#5fb0cf" opacity=".7"/>
<path d="M17 695l7-1v7h-7z" fill="#e8502a"/><path d="M25 693l8-1v9h-8z" fill="#78c22c"/><path d="M17 702h7v7l-7-1z" fill="#2a9ae0"/><path d="M25 702h8v9l-8-1z" fill="#f2c22a"/>
<path d="M68 693h14l3 3h9v19H68z" fill="#f0d98a" stroke="#b59a48"/><path d="M70 697h22v4H70z" fill="#fff"/><path d="M74 708h16l3 9H71z" fill="#6ab0e0"/><path d="M76 704h12v5H76z" fill="#9fd0f0"/><circle cx="73" cy="691" r="1.5" fill="#38b038"/><circle cx="82" cy="691" r="1.5" fill="#e04040"/>
<rect x="128" y="692" width="24" height="22" fill="#6aa8d8" stroke="#9cc8e8"/><rect x="131" y="695" width="18" height="16" fill="#f2f2f2"/><circle cx="140" cy="703" r="8" fill="#f08020"/><path d="M137 698l7 5-7 5z" fill="#fff"/>
<rect x="185" y="686" width="29" height="29" rx="6" fill="#f0761c"/><circle cx="200" cy="703" r="8" stroke="#fff" stroke-width="2" fill="none"/><path d="M196 704c0 6 8 6 8 0v-6" stroke="#fff" stroke-width="2" fill="none"/><path d="M203 692c5 0 9 4 8 9l-6-2z" fill="#fff"/>
<ellipse cx="257" cy="703" rx="14" ry="15" fill="#e2101c"/><ellipse cx="257" cy="703" rx="6" ry="11" fill="#2a2018"/>
<circle cx="315" cy="701" r="13" fill="#11a0e8"/><text x="309" y="709" font-size="21" font-weight="bold" fill="#fff" font-family="Liberation Sans,sans-serif">S</text><circle cx="323" cy="711" r="6" fill="#d8ece0" stroke="#5ab030" stroke-width="2"/>
<g stroke="#e01616" fill="none"><circle cx="375" cy="699" r="9" stroke-width="4"/><path d="M375 686v28M362 699h26M366 690l18 18M384 690l-18 18" stroke-width="3"/></g><path d="M372 696h6v20h-6z" fill="#e01616"/><path d="M366 703h4v11h-4zM380 703h4v11h-4z" fill="#e01616"/>
<path d="M432 688c-3 5-11 6-12 13 2 6 6 4 8 7l4 10 4-10c2-3 6-1 8-7-1-7-9-8-12-13z" fill="#2898e8"/><path d="M432 696v14M425 700l7 4 7-4" stroke="#bfe2fa" fill="none" stroke-width="1.5"/>
<path d="M1114 704h7l-3.5-4z" fill="#eee"/>
<rect x="1135" y="693" width="7" height="14" fill="#9aa0a4" stroke="#555"/><circle cx="1143" cy="708" r="4.5" fill="#28a030"/><path d="M1141 708l1.5 2 2.5-3.5" stroke="#fff" fill="none"/>
<path d="M1156 699h3l4-4v15l-4-4h-3z" fill="#d8d8d8"/><circle cx="1166" cy="709" r="4.5" fill="#d02020"/><path d="M1164 707l4 4M1168 707l-4 4" stroke="#fff"/>
<path d="M1180 708h1v-1M1182.5 708v-2.5M1185 708v-5M1187.5 708v-8M1190 708v-11" stroke="#eee" stroke-width="1.5" fill="none"/>
</svg>
<span class="t" style="left:1085px;top:693px;color:#f0f0f0;font-size:12px">EN</span>
<span class="t" style="left:1213px;top:687px;color:#f0f0f0;font-size:12px;transform:scaleX(.92)">2:38 PM</span>
<span class="t" style="left:1211px;top:702px;color:#f0f0f0;font-size:12px;transform:scaleX(.92)">03/16/19</span>
<div class="b" style="left:1268px;top:685px;width:12px;height:35px;background:rgba(255,255,255,.12);border-left:1px solid rgba(255,255,255,.35);box-sizing:border-box"></div>

</body></html>
